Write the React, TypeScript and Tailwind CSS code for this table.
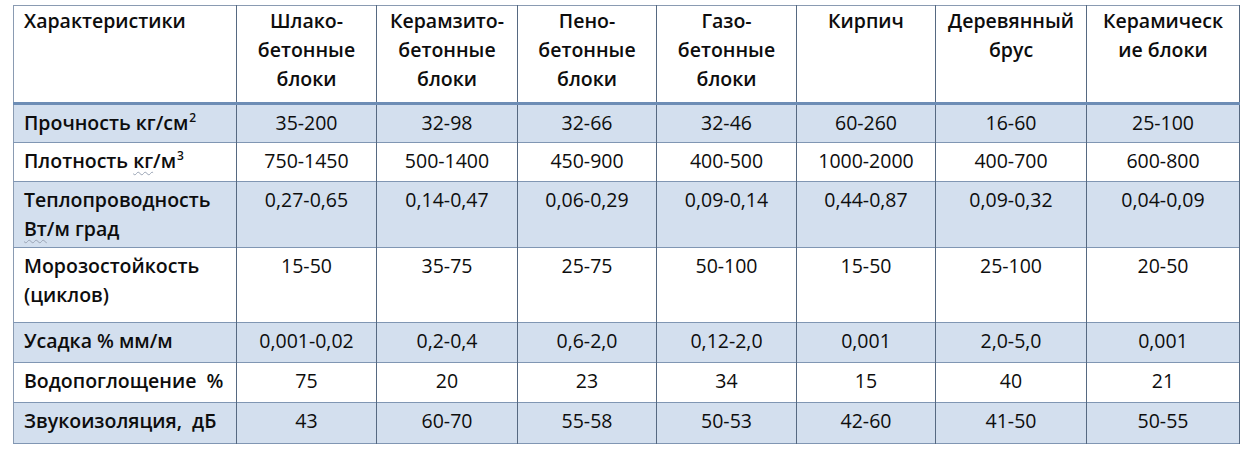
import React from "react";

const cols = [
  ["Шлако-", "бетонные", "блоки"],
  ["Керамзито-", "бетонные", "блоки"],
  ["Пено-", "бетонные", "блоки"],
  ["Газо-", "бетонные", "блоки"],
  ["Кирпич"],
  ["Деревянный", "брус"],
  ["Керамическ", "ие блоки"],
];

const widths = ["w-[223px]", "w-[140px]", "w-[141px]", "w-[139px]", "w-[140px]", "w-[139px]", "w-[151px]", "w-[153px]"];

const squiggle = "underline decoration-wavy decoration-[#9aa4b4] decoration-1 underline-offset-[3px]";
const sup = "text-[12px] relative -top-[8px] ml-[1px]";

type Row = { label: React.ReactNode; values: string[]; h: string; shaded: boolean };

const rows: Row[] = [
  {
    label: (
      <>
        Прочность кг/см<sup className={sup}>2</sup>
      </>
    ),
    values: ["35-200", "32-98", "32-66", "32-46", "60-260", "16-60", "25-100"],
    h: "h-[39px]",
    shaded: true,
  },
  {
    label: (
      <>
        Плотность <span className={squiggle}>кг</span>/м<sup className={sup}>3</sup>
      </>
    ),
    values: ["750-1450", "500-1400", "450-900", "400-500", "1000-2000", "400-700", "600-800"],
    h: "h-[39px]",
    shaded: false,
  },
  {
    label: (
      <>
        Теплопроводность
        <br />
        <span className={squiggle}>Вт</span>/м град
      </>
    ),
    values: ["0,27-0,65", "0,14-0,47", "0,06-0,29", "0,09-0,14", "0,44-0,87", "0,09-0,32", "0,04-0,09"],
    h: "h-[66px]",
    shaded: true,
  },
  {
    label: (
      <>
        Морозостойкость
        <br />
        (циклов)
      </>
    ),
    values: ["15-50", "35-75", "25-75", "50-100", "15-50", "25-100", "20-50"],
    h: "h-[75px]",
    shaded: false,
  },
  {
    label: "Усадка % мм/м",
    values: ["0,001-0,02", "0,2-0,4", "0,6-2,0", "0,12-2,0", "0,001", "2,0-5,0", "0,001"],
    h: "h-[40px]",
    shaded: true,
  },
  {
    label: "Водопоглощение  %",
    values: ["75", "20", "23", "34", "15", "40", "21"],
    h: "h-[40px]",
    shaded: false,
  },
  {
    label: "Звукоизоляция,  дБ",
    values: ["43", "60-70", "55-58", "50-53", "42-60", "41-50", "50-55"],
    h: "h-[41px]",
    shaded: true,
  },
];

export default function App() {
  return (
    <div className="w-[1253px] h-[454px] bg-white pt-[5px] pl-[13px] font-['Open_Sans',sans-serif] text-[19.5px] leading-[29px] text-[#0d0d0d]">
      <table className="table-fixed border-collapse w-[1226px] border border-[#8a9bb2]">
        <thead>
          <tr className="h-[98px] border-b-[3px] border-b-[#6d8db5]">
            <th className={`${widths[0]} align-top text-left font-semibold pl-[10px] pt-[0px] border-r border-r-[#566981]`}>
              Характеристики
            </th>
            {cols.map((c, i) => (
              <th
                key={i}
                className={`${widths[i + 1]} align-top text-center font-semibold pt-[0px] border-r border-r-[#566981] whitespace-pre`}
              >
                {c.map((line, j) => (
                  <div key={j}>{line}</div>
                ))}
              </th>
            ))}
          </tr>
        </thead>
        <tbody>
          {rows.map((r, i) => (
            <tr
              key={i}
              className={`${r.h} border-b border-b-[#8096b3] ${r.shaded ? "bg-[#d3dfee]" : "bg-white"}`}
            >
              <td className="align-top text-left font-semibold pl-[10px] pt-[3px] border-r border-r-[#566981] whitespace-pre">
                {r.label}
              </td>
              {r.values.map((v, j) => (
                <td key={j} className="align-top text-center pt-[3px] border-r border-r-[#566981]">
                  {v}
                </td>
              ))}
            </tr>
          ))}
        </tbody>
      </table>
    </div>
  );
}
